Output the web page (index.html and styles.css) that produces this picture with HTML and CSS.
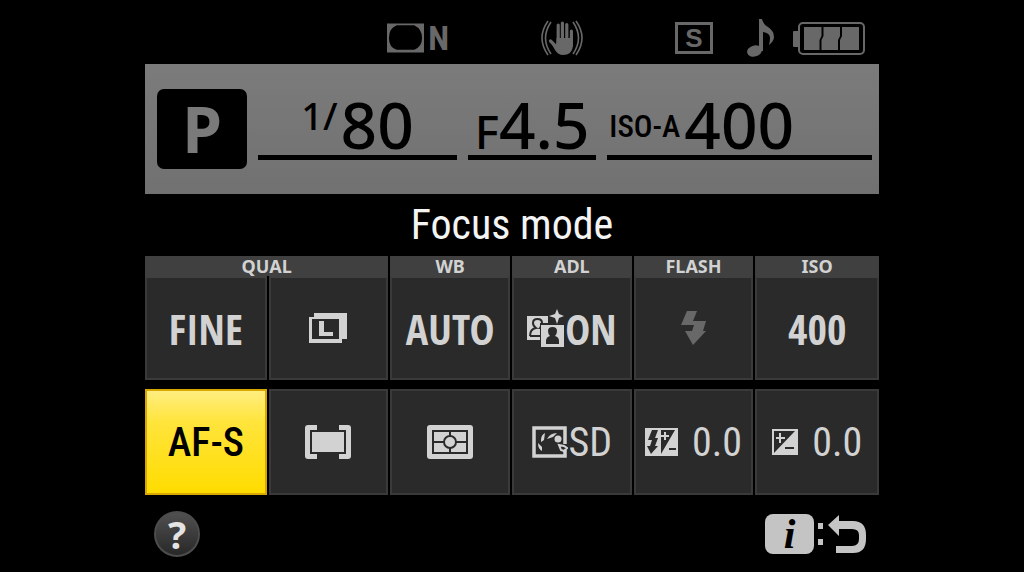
FILE: index.html
```
<!DOCTYPE html>
<html lang="en">
<head>
    <meta charset="utf-8">
    <title>Camera info display</title>
    <link rel="stylesheet" href="styles.css">
</head>
<body>
    <div class="screen">
        <div class="status">
            <div class="vignette">
                <svg width="37" height="30" viewBox="0 0 38 30"><path fill="currentColor" fill-rule="evenodd" d="M0 0h38v30H0zM10 2Q2 5 2 15t8 12h18q8-3 8-12T28 2z"/></svg>
                <span>N</span>
            </div>
            <svg width="42" height="36" viewBox="0 0 42 36">
                <g fill="none" stroke="currentColor" stroke-width="1.6">
                    <path d="M7 1Q-5 18 7 35M10 2Q-1 18 10 34M35 1q12 17 0 34M32 2q11 16 0 32"/>
                </g>
                <g fill="none" stroke="currentColor" stroke-width="3.2" stroke-linecap="round">
                    <path d="M17.2 5v16M21.4 3v18M25.8 4.500v17M30.400 11v12M9.500 21l7 7"/>
                </g>
                <path fill="currentColor" d="M15.600 18H32v8q-1 9-10 9-5 0-8-5l-4-7 5 2z"/>
            </svg>
            <div class="status-right">
                <span class="shot">S</span>
                <svg class="note" width="28" height="38" viewBox="0 0 28 38">
                    <ellipse cx="7.500" cy="32" rx="7.500" ry="5.500" fill="currentColor" transform="rotate(-15 7.500 32)"/>
                    <path fill="currentColor" d="M12 0h3q1 5 6 8 6 4 6 10 0 4-5 8 1-4 1-7 0-5-7-6v19h-4z"/>
                </svg>
                <svg width="72" height="33" viewBox="0 0 72 33">
                    <rect x="6" y="1" width="65" height="31" rx="4" fill="none" stroke="currentColor" stroke-width="2"/>
                    <path fill="currentColor" d="M0 10q0-1 1-1h4v16H1q-1 0-1-1zM11 5h17.500v9l-2 4v10H11zM30.500 5H47v9l-2 4v10H28.500V18l2-4zM49 5h17v23H47V18l2-4z"/>
                </svg>
            </div>
        </div>

        <div class="exposure">
            <div class="mode">P</div>
            <div class="field shutter"><span class="raised">1/</span><span class="number">80</span></div>
            <div class="field aperture"><span class="f">F</span><span class="number">4.5</span></div>
            <div class="field iso"><span class="iso-label">ISO-A</span><span class="number">400</span></div>
        </div>

        <h1>Focus mode</h1>

        <div class="settings">
            <div class="group wide">
                <div class="label">QUAL</div>
                <div class="pair">
                    <button class="cell">FINE</button>
                    <button class="cell" aria-label="Image size large">
                        <svg width="38" height="30" viewBox="0 0 38 30">
                            <path fill="currentColor" d="M5 0h33v26h-5v4H0V4h5z"/>
                            <path class="hole" d="M3 6h27v20H3z"/>
                            <path fill="currentColor" d="M10 8h5v11h9v4H10z"/>
                        </svg>
                    </button>
                </div>
            </div>
            <div class="group">
                <div class="label">WB</div>
                <button class="cell">AUTO</button>
            </div>
            <div class="group">
                <div class="label">ADL</div>
                <button class="cell">
                    <svg width="37" height="38" viewBox="0 0 37 38">
                        <path fill="currentColor" d="M0 7h21v24H0z"/>
                        <path class="line" d="M3 27q0-7 6-8-3-2-3-5 0-4 4.500-4t4.500 4q0 2-2 5h4M3 27h10"/>
                        <path class="hole" d="M13 14h24v24H13z"/>
                        <path fill="currentColor" d="M14 16h23v22H14zM30 0l2 5 5 2-5 2-2 6-2-6-6-2 6-2z"/>
                        <path class="hole" d="M19 35v-3q0-4 4-5-2-2-2-5 0-4 4.500-4t4.500 4q0 3-2 5 4 1 4 5v3z"/>
                    </svg>
                    <span>ON</span>
                </button>
            </div>
            <div class="group">
                <div class="label">FLASH</div>
                <button class="cell off" aria-label="Flash">
                    <svg width="26" height="34" viewBox="0 0 26 34"><path fill="currentColor" d="M6 0h10l-4 10h13l-3 10h3L12 34 4 20h7l2-6H0z"/></svg>
                </button>
            </div>
            <div class="group">
                <div class="label">ISO</div>
                <button class="cell">400</button>
            </div>

            <button class="cell selected">AF-S</button>
            <button class="cell" aria-label="AF area">
                <svg width="46" height="34" viewBox="0 0 46 34">
                    <path fill="currentColor" d="M3 0h9v5H5v24h7v5H3q-3 0-3-3V3q0-3 3-3zM43 0h-9v5h7v24h-7v5h9q3 0 3-3V3q0-3-3-3zM7 7h32v20H7z"/>
                </svg>
            </button>
            <button class="cell" aria-label="Matrix metering">
                <svg width="46" height="34" viewBox="0 0 46 34">
                    <rect width="46" height="34" rx="3" fill="currentColor"/>
                    <path class="line" d="M6 6h34v22H6zM6 17h11M29 17h11M23 6v5M23 23v5"/>
                    <circle class="line" cx="23" cy="17" r="6"/>
                </svg>
            </button>
            <button class="cell light">
                <svg width="36" height="32" viewBox="0 0 36 32">
                    <path fill="none" stroke="currentColor" stroke-width="3.500" d="M33 18V2H2v28h31v-6"/>
                    <g fill="currentColor">
                        <path d="M9 14q0-5 4-7l-1 7-3 2zM15 13q3-6 10-6l-4 4zM6 17l4 4v4q-4-2-4-8z"/>
                        <circle cx="26" cy="13" r="3.500"/>
                    </g>
                    <path d="M27 19l5 1 3 2-3 3-3-1z" class="thumb"/>
                </svg>
                <span>SD</span>
            </button>
            <button class="cell light spaced">
                <svg width="33" height="28" viewBox="0 0 33 28">
                    <path fill="currentColor" d="M0 0h33v28H0z"/>
                    <path class="hole" d="M7 2h6l-3 8h3l-3 8h3l-7 8-4-8h3l2-6H3zM16 2h14L16 26z"/>
                    <path fill="currentColor" d="M19 4h2v3h3v2h-3v3h-2V9h-3V7h3z"/>
                    <path class="hole" d="M24 20h7v2h-7z"/>
                </svg>
                <span>0.0</span>
            </button>
            <button class="cell light spaced">
                <svg width="26" height="26" viewBox="0 0 26 26">
                    <path fill="currentColor" d="M0 0h26v26H0z"/>
                    <path class="hole" d="M2 2h21L2 24zM13 18h9v2h-9z"/>
                    <path fill="currentColor" d="M7 4h2v4h4v2H9v4H7v-4H4V8h3z"/>
                </svg>
                <span>0.0</span>
            </button>
        </div>

        <div class="footer">
            <button class="help">?</button>
            <div class="back">
                <button class="info">i</button>
                <svg width="6" height="22" viewBox="0 0 6 22"><path fill="currentColor" d="M0 0h5v6H0zM0 16h5v6H0z"/></svg>
                <svg width="38" height="38" viewBox="0 0 38 38">
                    <path fill="currentColor" d="M11 0v6h14q13 0 13 14v4q0 14-13 14H8v-7h16q7 0 7-7v-4q0-6-7-6H11v7L0 10z"/>
                </svg>
            </div>
        </div>
    </div>
</body>
</html>
```
FILE: styles.css
```
* {
    box-sizing: border-box;
}
body {
    margin: 0;
    background-color: #000;
    color: #d2d2d2;
    font-family: "Roboto Condensed", Roboto, sans-serif;
}
svg {
    display: block;
    flex: none;
}
button {
    border: none;
    padding: 0;
    font-family: inherit;
    cursor: pointer;
}
.screen {
    margin: 0 145px;
}

/* top icons */
.status {
    display: flex;
    justify-content: flex-end;
    align-items: center;
    gap: 92px;
    padding: 12px 14px 0 0;
    height: 64px;
    color: #686868;
}
.vignette {
    display: flex;
    align-items: center;
    gap: 4px;
    font: bold 34px/34px "Roboto Condensed", sans-serif;
}
.status-right {
    display: flex;
    align-items: center;
}
.shot {
    width: 38px;
    height: 32px;
    border: 3px solid;
    font: bold 26px/26px "Liberation Sans", sans-serif;
    text-align: center;
}
.note {
    margin: 0 18px 0 34px;
}

/* shutter, aperture, iso */
.exposure {
    display: flex;
    align-items: center;
    gap: 11px;
    height: 130px;
    padding: 0 7px 0 12px;
    background: linear-gradient(#7b7b7b, #717171);
    color: #000;
    font-family: "Noto Sans", sans-serif;
}
.mode {
    width: 90px;
    height: 80px;
    border-radius: 7px;
    background-color: #000;
    color: #7a7a7a;
    font: bold 64px/80px "Noto Sans", sans-serif;
    text-align: center;
}
.field {
    display: flex;
    align-items: baseline;
    justify-content: center;
    height: 62px;
    border-bottom: 5px solid #000;
    line-height: 54px;
    white-space: nowrap;
}
.shutter {
    flex: 200;
}
.aperture {
    flex: 129;
}
.iso {
    flex: 264;
    justify-content: flex-start;
    padding-left: 2px;
}
.number {
    font-size: 64px;
    font-weight: 500;
}
.raised {
    align-self: flex-start;
    padding-right: 3px;
    font-size: 38px;
    font-weight: 500;
    line-height: 34px;
}
.f {
    font-size: 46px;
    font-weight: 500;
}
.iso-label {
    align-self: center;
    padding-right: 4px;
    font: 500 31px/34px "Roboto Condensed", sans-serif;
}

h1 {
    margin: 0;
    color: #f4f4f4;
    font-size: 42px;
    font-weight: 400;
    line-height: 62px;
    text-align: center;
}

/* settings grid */
.settings {
    display: grid;
    grid-template-columns: 122fr 120fr 120fr 120fr 120fr 124fr;
    gap: 9px 2px;
}
.wide {
    grid-column: span 2;
}
.pair {
    display: grid;
    grid-template-columns: 122fr 120fr;
    gap: 2px;
}
.label {
    height: 20px;
    background-color: #404040;
    font: bold 18px/20px "Noto Sans", sans-serif;
    text-align: center;
}
.cell {
    display: flex;
    align-items: center;
    justify-content: center;
    gap: 1px;
    width: 100%;
    height: 106px;
    border: 2px solid #3a3a3a;
    background-color: #2a2a2a;
    color: #d2d2d2;
    font-family: "Open Sans Condensed", "Roboto Condensed", sans-serif;
    font-size: 42px;
    font-weight: 700;
}
.group .cell {
    height: 104px;
    border-top-color: #404040;
}
.light {
    font-family: "Roboto Condensed", sans-serif;
    font-size: 40px;
    font-weight: 400;
}
.spaced {
    gap: 14px;
}
.off {
    color: #686868;
}
.selected {
    border-color: #d9a800;
    background: linear-gradient(#ffee80, #ffe43c 30%, #ffdc00);
    color: #000;
    font-family: "Roboto Condensed", sans-serif;
    font-size: 40px;
    font-weight: 500;
}
.hole {
    fill: #2a2a2a;
}
.line {
    fill: none;
    stroke: #2a2a2a;
    stroke-width: 2;
}
.thumb {
    fill: #2a2a2a;
    stroke: currentColor;
    stroke-width: 2;
}

/* bottom bar */
.footer {
    display: flex;
    justify-content: space-between;
    align-items: center;
    height: 77px;
    padding: 0 13px 0 9px;
}
.help {
    width: 46px;
    height: 46px;
    border: 2px solid #4c4c4c;
    border-radius: 50%;
    background: linear-gradient(#505050, #282828);
    color: #e4e4e4;
    font: bold 38px/42px "Noto Sans", sans-serif;
}
.back {
    display: flex;
    align-items: center;
    gap: 4px;
    color: #c4c4c4;
}
.info {
    width: 49px;
    height: 40px;
    border-radius: 8px;
    background-color: #c4c4c4;
    color: #000;
    font: italic bold 42px/40px "Liberation Serif", serif;
}
```
